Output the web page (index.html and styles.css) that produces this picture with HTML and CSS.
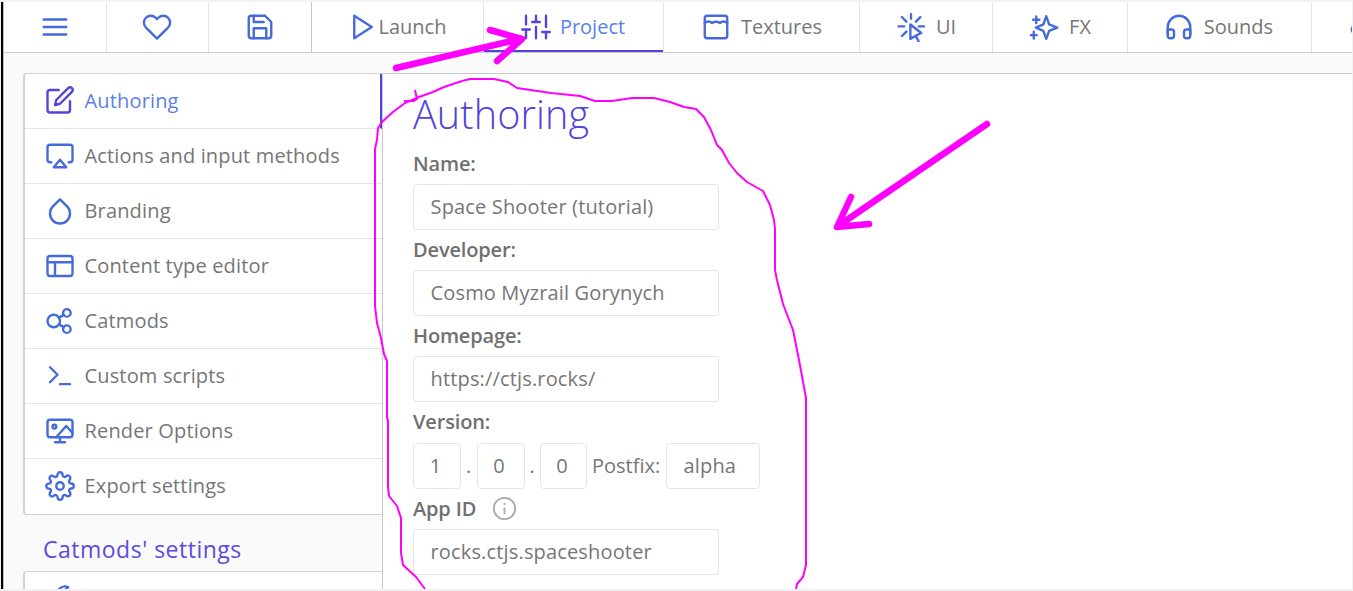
FILE: index.html
```html
<!DOCTYPE html>
<html lang="en">
<head>
<meta charset="utf-8">
<title>Project - Authoring</title>
<link rel="stylesheet" href="styles.css">
</head>
<body>
<div class="window">
  <nav class="tabs">
    <div class="tab tab-menu"><svg class="icon" viewBox="0 0 24 24"><path d="M3 6h18M3 12h18M3 18h18"/></svg></div>
    <div class="tab tab-heart"><svg class="icon" viewBox="0 0 24 24"><path d="M20.840 4.610a5.500 5.500 0 0 0-7.780 0L12 5.670l-1.060-1.060a5.500 5.500 0 0 0-7.780 7.780l1.060 1.060L12 21.230l7.780-7.780 1.060-1.060a5.500 5.500 0 0 0 0-7.780z"/></svg></div>
    <div class="tab tab-save"><svg class="icon" viewBox="0 0 24 24"><path d="M19 21H5a2 2 0 0 1-2-2V5a2 2 0 0 1 2-2h11l5 5v11a2 2 0 0 1-2 2z"/><path d="M17 21v-8H7v8M7 3v5h8"/></svg></div>
    <div class="tab tab-launch"><svg class="icon" viewBox="0 0 24 24"><path d="M5 3l14 9-14 9z"/></svg><span>Launch</span></div>
    <div class="tab tab-project active"><svg class="icon" viewBox="0 0 24 24"><path d="M4 21v-7M4 10V3M12 21v-9M12 8V3M20 21v-5M20 12V3M1 14h6M9 8h6M17 16h6"/></svg><span>Project</span></div>
    <div class="tab tab-textures"><svg class="icon" viewBox="0 0 24 24"><rect x="3" y="3" width="18" height="18" rx="2"/><path d="M3 8.800Q6 6.300 8.800 8.800Q12 6.800 15.200 8.800Q18 6.300 21 8.800"/></svg><span>Textures</span></div>
    <div class="tab tab-ui"><svg class="icon" viewBox="0 0 24 24"><path d="M11.500 10l8.700 6.800-4.500 2.200-4.200 2.500zM15.700 19l2.300 4.300M12 1.700v3.600M2 11.500h4.500M18.300 11.500h4M4.700 4l3.600 3.700M19.500 4L16 7.700M4.800 19.200l3.500-3.500"/></svg><span>UI</span></div>
    <div class="tab tab-fx"><svg class="icon" viewBox="0 0 24 24"><path d="M13.800 3.300l2.300 6.600 6.500 2.600-6.500 2.600-2.300 6.400-2.300-6.400L5.500 12.500l6-2.600zM5.800 3.500v5.400M3.300 6.200h5M3.800 15.800v5.400M1.500 18.500h4.600"/></svg><span>FX</span></div>
    <div class="tab tab-sounds"><svg class="icon" viewBox="0 0 24 24"><path d="M3 18v-6a9 9 0 0 1 18 0v6"/><path d="M21 19a2 2 0 0 1-2 2h-1a2 2 0 0 1-2-2v-3a2 2 0 0 1 2-2h3zM3 19a2 2 0 0 0 2 2h1a2 2 0 0 0 2-2v-3a2 2 0 0 0-2-2H3z"/></svg><span>Sounds</span></div>
    <div class="tab tab-more"><svg class="icon" viewBox="0 0 24 24"><circle cx="6" cy="14" r="3"/></svg></div>
  </nav>
  <div class="workspace">
    <aside class="sidebar">
      <ul class="menu">
        <li class="item selected"><svg class="icon" viewBox="0 0 24 24"><path d="M11 4H4a2 2 0 0 0-2 2v14a2 2 0 0 0 2 2h14a2 2 0 0 0 2-2v-7" transform="translate(0 -.8)"/><path d="M18.500 1.700a2.120 2.120 0 0 1 3 3L12 14.200l-4 1 1-4z"/></svg><span>Authoring</span></li>
        <li class="item"><svg class="icon" viewBox="0 0 24 24"><path d="M5 17H4a2 2 0 0 1-2-2V5a2 2 0 0 1 2-2h16a2 2 0 0 1 2 2v10a2 2 0 0 1-2 2h-1"/><path d="M12 15l5 6H7z"/></svg><span>Actions and input methods</span></li>
        <li class="item"><svg class="icon" viewBox="0 0 24 24"><path d="M12 2.690l5.660 5.660a8 8 0 1 1-11.310 0z"/></svg><span>Branding</span></li>
        <li class="item"><svg class="icon" viewBox="0 0 24 24"><rect x="2" y="4" width="20" height="16" rx="2"/><path d="M2 9h20M8 9v11"/></svg><span>Content type editor</span></li>
        <li class="item"><svg class="icon" viewBox="0 0 24 24"><circle cx="7" cy="12" r="5"/><circle cx="17.500" cy="5.500" r="3"/><circle cx="17.500" cy="18.500" r="3"/><path d="M11.300 9.300L15 7.100M11.300 14.700l3.700 2.200"/></svg><span>Catmods</span></li>
        <li class="item"><svg class="icon" viewBox="0 0 24 24"><path d="M4 17l6-6-6-6M12 18.500h8"/></svg><span>Custom scripts</span></li>
        <li class="item"><svg class="icon" viewBox="0 0 24 24"><rect x="2" y="3" width="20" height="14" rx="2"/><circle cx="7.500" cy="8.500" r="1.500"/><path d="M9 17l8-9 5 5.500M12 17v4M8 21h8"/></svg><span>Render Options</span></li>
        <li class="item"><svg class="icon" viewBox="0 0 24 24"><circle cx="12" cy="12" r="3"/><path d="M19.400 15a1.650 1.650 0 0 0 .33 1.820l.06.060a2 2 0 0 1 0 2.830 2 2 0 0 1-2.830 0l-.06-.06a1.650 1.650 0 0 0-1.820-.33 1.650 1.650 0 0 0-1 1.510V21a2 2 0 0 1-2 2 2 2 0 0 1-2-2v-.09A1.650 1.650 0 0 0 9 19.400a1.650 1.650 0 0 0-1.820.33l-.06.060a2 2 0 0 1-2.830 0 2 2 0 0 1 0-2.830l.06-.06a1.650 1.650 0 0 0 .33-1.820 1.650 1.650 0 0 0-1.510-1H3a2 2 0 0 1-2-2 2 2 0 0 1 2-2h.09A1.650 1.650 0 0 0 4.600 9a1.650 1.650 0 0 0-.33-1.820l-.06-.06a2 2 0 0 1 0-2.830 2 2 0 0 1 2.830 0l.06.060a1.650 1.650 0 0 0 1.820.33H9a1.650 1.650 0 0 0 1-1.510V3a2 2 0 0 1 2-2 2 2 0 0 1 2 2v.09a1.650 1.650 0 0 0 1 1.510 1.650 1.650 0 0 0 1.820-.33l.06-.06a2 2 0 0 1 2.830 0 2 2 0 0 1 0 2.830l-.06.060a1.650 1.650 0 0 0-.33 1.820V9a1.650 1.650 0 0 0 1.510 1H21a2 2 0 0 1 2 2 2 2 0 0 1-2 2h-.09a1.650 1.650 0 0 0-1.510 1z"/></svg><span>Export settings</span></li>
      </ul>
      <h2 class="group-title">Catmods' settings</h2>
      <ul class="menu">
        <li class="item"><svg class="icon" viewBox="0 0 24 24"><path d="M14.700 6.300a1 1 0 0 0 0 1.400l1.600 1.600a1 1 0 0 0 1.400 0l3.770-3.770a6 6 0 0 1-7.940 7.940l-6.910 6.910a2.120 2.120 0 0 1-3-3l6.910-6.910a6 6 0 0 1 7.940-7.940z"/></svg></li>
      </ul>
    </aside>
    <main class="panel">
      <h1 class="title">Authoring</h1>
      <div class="label">Name:</div>
      <div class="input wide">Space Shooter (tutorial)</div>
      <div class="label">Developer:</div>
      <div class="input wide">Cosmo Myzrail Gorynych</div>
      <div class="label">Homepage:</div>
      <div class="input wide">https://ctjs.rocks/</div>
      <div class="label">Version:</div>
      <div class="version">
        <div class="input num">1</div><span class="dot">.</span><div class="input num">0</div><span class="dot">.</span><div class="input num last">0</div>
        <span class="postfix">Postfix:</span><div class="input suffix">alpha</div>
      </div>
      <div class="label"><span>App ID</span><svg class="info" viewBox="0 0 24 24"><circle cx="12" cy="12" r="9.500"/><path d="M12 11v6M12 7.200v1.600"/></svg></div>
      <div class="input wide">rocks.ctjs.spaceshooter</div>
    </main>
  </div>
</div>
<svg class="annotations" viewBox="0 0 1353 591">
  <g class="arrow"><path d="M396 68L520 39M490 30l32 9-25 22"/><path d="M987 124L838 226M851 197l-14 30 32-3"/></g>
  <path class="outline" d="M425 589L416 577 403 565 401 553V518L397 506 389 496 388 487V420L387 418V361L384 354 381 338 377 323 375 306V149L377 140 378 128 382 122 393 112 405 103 419 97 433 92 444 87 462 81 470 79H494L508 82 517 88 551 93 580 96 595 101H612L632 98H654L670 102 684 107 696 109 704 117 711 130 717 145 722 150 729 163 737 173 747 182 763 191 770 205 774 220 775 229V270L777 280 783 304 793 330 799 360 806 398V565L803 577 797 584 796 589M404 101h10l3-2-2-9"/>
</svg>
</body>
</html>
```
FILE: styles.css
```css
* { box-sizing: border-box; }
body {
  margin: 0;
  width: 1353px;
  height: 591px;
  overflow: hidden;
  background: #f2f2f2;
  font-family: "Open Sans", "Noto Sans", sans-serif;
  font-size: 20px;
  color: #767676;
}
.window {
  display: flex;
  flex-direction: column;
  height: 587px;
  margin: 2px 1px 2px 1px;
  border-left: 2px solid #000;
  background: #fafafa;
  overflow: hidden;
}
.tabs {
  display: flex;
  flex: none;
  height: 51px;
  border-left: 1px solid #b8bec2;
  border-bottom: 1px solid #c5cacf;
  background: #fff;
}
.tab {
  display: flex;
  flex: none;
  align-items: center;
  justify-content: center;
  border-right: 1px solid #e3e5e7;
}
.tab span { line-height: 28px; }
.icon {
  flex: none;
  width: 30px;
  height: 30px;
  fill: none;
  stroke: #446adb;
  stroke-width: 1.9;
  stroke-linecap: round;
  stroke-linejoin: round;
}
.tab-menu { width: 103px; }
.tab-heart { width: 102px; padding-right: 2px; }
.tab-save { width: 103px; border-color: #c5cacf; }
.tab-launch { width: 172px; gap: 1px; padding-right: 1px; }
.tab-project { width: 180px; gap: 9px; padding-right: 1px; }
.tab-textures { width: 196px; gap: 10px; }
.tab-ui { width: 133px; gap: 10px; }
.tab-fx { width: 135px; gap: 10px; }
.tab-sounds { width: 184px; gap: 10px; padding-right: 2px; }
.tab-more { width: 100px; justify-content: flex-start; padding-left: 36px; border: 0; }
.active { box-shadow: inset 0 -2px #5144db; color: #5a7fe8; }
.active .icon, .selected .icon { stroke: #5144db; }
.workspace {
  display: flex;
  flex: 1;
  padding-top: 20px;
  border-left: 1px solid #b8bec2;
}
.sidebar { width: 378px; padding-left: 19px; }
.menu {
  margin: 0;
  padding: 0;
  list-style: none;
  border: 1px solid #cfd4d8;
  border-left-width: 2px;
  border-right: 0;
  border-radius: 4px 0 0 4px;
  background: #fff;
}
.item {
  display: flex;
  align-items: center;
  gap: 10px;
  height: 55px;
  padding-left: 19.500px;
  border-bottom: 1px solid #e5e5e5;
  letter-spacing: .16px;
}
.item span { padding-bottom: 1px; }
.item:last-child { border-bottom: 0; height: 54.500px; }
.selected { border-right: 2px solid #5144db; color: #5a7fe8; }
.group-title {
  margin: 0;
  height: 56px;
  padding: 18px 0 0 20px;
  color: #5a4be0;
  font-size: 23px;
  font-weight: 400;
  letter-spacing: .5px;
  line-height: 32px;
}
.panel {
  flex: 1;
  padding-left: 30px;
  border-top: 1px solid #c5cacf;
  border-left: 1px solid #c5cacf;
  background: #fff;
}
.title {
  margin: 0;
  height: 69.600px;
  padding-top: 13px;
  color: #5144db;
  font-size: 39.500px;
  font-weight: 300;
  letter-spacing: .15px;
  line-height: 54px;
}
.label {
  display: flex;
  align-items: center;
  height: 40.250px;
  padding-bottom: 1px;
  font-weight: 600;
  letter-spacing: -.15px;
  color: #707070;
}
.input {
  display: flex;
  align-items: center;
  height: 46px;
  padding: 0 16px 1px 16.500px;
  border: 1px solid #e5e5e5;
  border-radius: 4px;
  background: #fff;
  letter-spacing: .16px;
}
.wide { width: 306px; }
.version { display: flex; align-items: center; }
.num { width: 48px; justify-content: center; padding: 0 3px 1px 0; }
.num.last { width: 47px; }
.dot { width: 15.500px; text-align: center; }
.postfix { width: 79px; padding-left: 5px; }
.suffix { width: 94px; }
.info {
  width: 27px;
  height: 27px;
  margin-left: 15px;
  fill: none;
  stroke: #aaa;
  stroke-width: 1.600;
}
.annotations {
  position: absolute;
  inset: 0;
  width: 1353px;
  height: 591px;
  fill: none;
  stroke: #f0f;
  stroke-linecap: round;
  stroke-linejoin: round;
}
.arrow { stroke-width: 6.500; }
.outline { stroke-width: 2; stroke-linecap: butt; }
```
